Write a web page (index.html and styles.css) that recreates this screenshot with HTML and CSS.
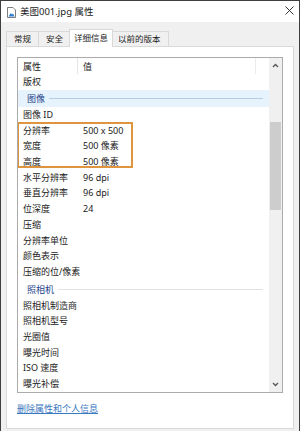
FILE: index.html
```html
<!DOCTYPE html>
<html>
<head>
  <title>美图001.jpg 属性</title>
  <link rel="stylesheet" href="styles.css">
</head>
<body>
  <div class="window">
    <!-- title bar -->
    <div class="titlebar">
      <svg class="file-icon" width="9" height="11" viewBox="0 0 9 11">
        <path d="M0.5 0.5 H6 L8.5 3 V10.5 H0.5 Z" fill="#fff" stroke="#7d7d7d"/>
        <path d="M1.5 9.5 L3.8 6 L5.2 7.6 L6.2 6.6 L7.5 9.5 Z" fill="#2f7fd0"/>
      </svg>
      <span class="title">美图001.jpg 属性</span>
      <svg class="close" width="9" height="9" viewBox="0 0 9 9">
        <path d="M0.5 0.5 L8.5 8.5 M8.5 0.5 L0.5 8.5" stroke="#333" stroke-width="1"/>
      </svg>
    </div>

    <div class="body">
      <div class="tabs">
        <div class="tab">常规</div>
        <div class="tab">安全</div>
        <div class="tab active">详细信息</div>
        <div class="tab">以前的版本</div>
      </div>

      <div class="panel">
        <div class="list">
          <div class="list-main">
            <div class="row head">
              <div class="name">属性</div>
              <div class="value">值</div>
            </div>
            <div class="row first"><div class="name">版权</div><div class="value"></div></div>

            <div class="group selected"><span>图像</span><i class="line"></i></div>
            <div class="row"><div class="name">图像 ID</div><div class="value"></div></div>
            <div class="marked">
              <div class="row"><div class="name">分辨率</div><div class="value">500 x 500</div></div>
              <div class="row"><div class="name">宽度</div><div class="value">500 像素</div></div>
              <div class="row"><div class="name">高度</div><div class="value">500 像素</div></div>
            </div>
            <div class="row"><div class="name">水平分辨率</div><div class="value">96 dpi</div></div>
            <div class="row"><div class="name">垂直分辨率</div><div class="value">96 dpi</div></div>
            <div class="row"><div class="name">位深度</div><div class="value">24</div></div>
            <div class="row"><div class="name">压缩</div><div class="value"></div></div>
            <div class="row"><div class="name">分辨率单位</div><div class="value"></div></div>
            <div class="row"><div class="name">颜色表示</div><div class="value"></div></div>
            <div class="row"><div class="name wide">压缩的位/像素</div><div class="value"></div></div>

            <div class="group"><span>照相机</span><i class="line"></i></div>
            <div class="row"><div class="name wide">照相机制造商</div><div class="value"></div></div>
            <div class="row"><div class="name">照相机型号</div><div class="value"></div></div>
            <div class="row"><div class="name">光圈值</div><div class="value"></div></div>
            <div class="row"><div class="name">曝光时间</div><div class="value"></div></div>
            <div class="row"><div class="name">ISO 速度</div><div class="value"></div></div>
            <div class="row"><div class="name">曝光补偿</div><div class="value"></div></div>
          </div>

          <div class="scrollbar">
            <div class="arrow">
              <svg width="7" height="5" viewBox="0 0 7 5"><polyline points="1,4 3.5,1.5 6,4" fill="none" stroke="#555" stroke-width="1.3"/></svg>
            </div>
            <div class="thumb"></div>
            <div class="arrow down">
              <svg width="7" height="5" viewBox="0 0 7 5"><polyline points="1,1 3.5,3.5 6,1" fill="none" stroke="#555" stroke-width="1.3"/></svg>
            </div>
          </div>
        </div>

        <a href="#" class="remove-link">删除属性和个人信息</a>
      </div>
    </div>
  </div>
</body>
</html>
```

FILE: styles.css
```css
* {
  box-sizing: border-box;
}

body {
  margin: 0;
  font-family: "Noto Sans", "Noto Sans CJK SC", sans-serif;
  font-size: 9px;
  color: #222;
}

.window {
  width: 300px;
  height: 431px;
  border: 1px solid #3f3f3f;
  border-bottom: none;
  background-color: #f0f0f0;
  display: flex;
  flex-direction: column;
}

/* Title bar */
.titlebar {
  height: 21px;
  background-color: #fff;
  display: flex;
  align-items: center;
  gap: 4px;
  padding: 0 5px 0 6px;
}

.file-icon {
  margin-top: 2px;
}

.title {
  flex: 1;
  font-size: 9.5px;
  line-height: 12px;
  color: #1a1a1a;
}

.close {
  margin-bottom: 3px;
}

/* Body with tabs */
.body {
  flex: 1;
  display: flex;
  flex-direction: column;
  padding: 7px 5px 2px;
}

.tabs {
  display: flex;
  align-items: flex-start;
  height: 17px;
  position: relative;
  z-index: 1;
}

.tab {
  height: 15px;
  margin-top: 2px;
  margin-left: -1px;
  padding: 0 7px;
  border: 1px solid #d9d9d9;
  border-bottom: none;
  font-size: 8.5px;
  line-height: 13px;
  color: #1a1a1a;
}

.tab:first-child {
  margin-left: 0;
}

.tab.active {
  height: 18px;
  margin: 0 -2px 0 -2px;
  padding: 0 4px;
  background-color: #fff;
  line-height: 16px;
  position: relative;
}

.panel {
  flex: 1;
  background-color: #fff;
  border: 1px solid #d9d9d9;
  padding: 10px;
  display: flex;
  flex-direction: column;
}

/* Details list */
.list {
  height: 336px;
  border: 1px solid #ababab;
  display: flex;
}

.list-main {
  flex: 1;
  overflow: hidden;
}

.row {
  display: flex;
  height: 15.7px;
  line-height: 15.7px;
  white-space: nowrap;
}

.row .name {
  width: 60px;
  padding-left: 5px;
  flex-shrink: 0;
}

.row .name.wide {
  overflow: visible;
}

.row .value {
  padding-left: 5px;
}

.row.head {
  height: 16px;
  line-height: 17px;
}

.row.head .name {
  border-right: 1px solid #e5e5e5;
}

.row.head .value {
  width: 178px;
  border-right: 1px solid #ececec;
}

.row.first {
  height: 15px;
  line-height: 15px;
}

.group {
  display: flex;
  align-items: center;
  height: 16px;
  margin-top: 2px;
  padding: 0 6px 0 9px;
  color: #23428a;
}

.group span {
  line-height: 16px;
}

.group .line {
  flex: 1;
  height: 1px;
  margin-left: 4px;
  background-color: #e2e2e2;
}

.group.selected {
  height: 17px;
  margin-top: 1px;
  background-color: #e7f3fc;
}

.group.selected .line {
  background-color: #b9cde2;
}

/* orange annotation drawn over three rows */
.marked {
  position: relative;
}

.marked::after {
  content: "";
  position: absolute;
  left: -1px;
  top: -1px;
  width: 112px;
  bottom: 2px;
  border: 2px solid #df9440;
}

/* Scrollbar */
.scrollbar {
  width: 13px;
  background-color: #f0f0f0;
  display: flex;
  flex-direction: column;
}

.arrow {
  height: 15px;
  display: flex;
  align-items: center;
  justify-content: center;
}

.arrow.down {
  margin-top: auto;
}

.thumb {
  height: 88px;
  margin: 49px 1px 0;
  background-color: #cdcdcd;
}

.remove-link {
  margin-top: 9px;
  align-self: flex-start;
  line-height: 14px;
  color: #3a78c0;
  text-decoration: underline;
}
```
